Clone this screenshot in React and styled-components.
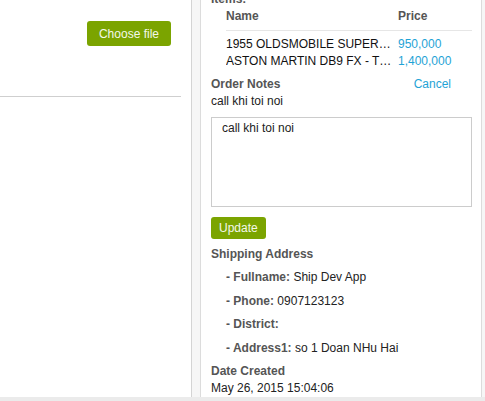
import React from "react";
import styled, { createGlobalStyle } from "styled-components";

const GlobalStyle = createGlobalStyle`
  html, body {
    margin: 0;
    padding: 0;
    background: #ffffff;
    font-family: "Liberation Sans", Arial, sans-serif;
    font-size: 12px;
    color: #222222;
  }
`;

const Page = styled.div`
  display: flex;
  flex-direction: column;
  width: 485px;
  height: 401px;
  overflow: hidden;
`;

const Main = styled.div`
  display: flex;
  height: 397px;
`;

const BottomBar = styled.div`
  height: 4px;
  background: #ebebeb;
`;

const LeftPane = styled.div`
  width: 191px;
  border-right: 1px solid #d4d4d4;
  background: #fff;
`;

const UploadRow = styled.div`
  display: flex;
  justify-content: flex-end;
  align-items: flex-start;
  padding: 21px 10px 0 0;
  height: 75px;
  border-bottom: 1px solid #cfcfcf;
  margin-right: 10px;
`;

const GreenButton = styled.button`
  background: #7ba400;
  color: #f4f8ea;
  border: none;
  border-radius: 3px;
  font-family: inherit;
  font-size: 12px;
  height: ${(p) => p.h}px;
  padding: 0 ${(p) => p.px}px;
  cursor: pointer;
`;

const RightArea = styled.div`
  flex: 1;
  background: #f6f6f6;
  padding: 0 3px 0 8px;
  display: flex;
`;

const Panel = styled.div`
  flex: 1;
  background: #fff;
  border-left: 1px solid #dcdcdc;
  border-right: 1px solid #dcdcdc;
  overflow: hidden;
`;

const Content = styled.div`
  margin-top: -9px;
  padding: 0 9px 0 10px;
  line-height: 17px;
`;

const Label = styled.div`
  font-weight: bold;
  color: #555555;
  margin-top: ${(p) => p.mt || 0}px;
`;

const Table = styled.div`
  margin-left: 15px;
`;

const TableRow = styled.div`
  display: grid;
  grid-template-columns: 172px 1fr;
`;

const HeaderRow = styled(TableRow)`
  font-weight: bold;
  color: #555555;
  padding-bottom: 5px;
  border-bottom: 1px solid #e6e6e6;
  margin-bottom: 5px;
`;

const ItemName = styled.div`
  white-space: nowrap;
  overflow: hidden;
  text-overflow: ellipsis;
  padding-right: 5px;
  color: #111;
`;

const Price = styled.div`
  color: #1fa3d6;
`;

const NotesHead = styled.div`
  display: flex;
  justify-content: space-between;
  margin-top: 6px;
  padding-right: 21px;
`;

const LinkText = styled.span`
  color: #1fa3d6;
  cursor: pointer;
`;

const Notes = styled.textarea`
  display: block;
  box-sizing: border-box;
  width: 100%;
  height: 90px;
  margin: 7px 0 10px;
  padding: 2px 10px;
  border: 1px solid #cccccc;
  font-family: inherit;
  font-size: 12px;
  line-height: 17px;
  color: #222;
  resize: none;
`;

const AddressList = styled.ul`
  list-style: none;
  margin: 6px 0 0;
  padding: 0 0 0 15px;
`;

const AddressItem = styled.li`
  margin-bottom: 6.5px;
`;

const Key = styled.b`
  color: #555555;
`;

const items = [
  { name: "1955 OLDSMOBILE SUPER 88 CONVERTIBLE", price: "950,000" },
  { name: "ASTON MARTIN DB9 FX - TOURING", price: "1,400,000" },
];

const address = [
  ["Fullname", "Ship Dev App"],
  ["Phone", "0907123123"],
  ["District", ""],
  ["Address1", "so 1 Doan NHu Hai"],
];

export default function App() {
  return (
    <Page>
      <GlobalStyle />
      <Main>
        <LeftPane>
          <UploadRow>
            <GreenButton h={25} px={12}>
              Choose file
            </GreenButton>
          </UploadRow>
        </LeftPane>
        <RightArea>
          <Panel>
            <Content>
              <Label>Items:</Label>
              <Table>
                <HeaderRow>
                  <div>Name</div>
                  <div>Price</div>
                </HeaderRow>
                {items.map((it) => (
                  <TableRow key={it.name}>
                    <ItemName>{it.name}</ItemName>
                    <Price>{it.price}</Price>
                  </TableRow>
                ))}
              </Table>
              <NotesHead>
                <Label>Order Notes</Label>
                <LinkText>Cancel</LinkText>
              </NotesHead>
              <div>call khi toi noi</div>
              <Notes defaultValue="call khi toi noi" />
              <GreenButton h={22} px={8}>
                Update
              </GreenButton>
              <Label mt={7}>Shipping Address</Label>
              <AddressList>
                {address.map(([k, v]) => (
                  <AddressItem key={k}>
                    <Key>- {k}:</Key> {v}
                  </AddressItem>
                ))}
              </AddressList>
              <Label mt={1}>Date Created</Label>
              <div>May 26, 2015 15:04:06</div>
            </Content>
          </Panel>
        </RightArea>
      </Main>
      <BottomBar />
    </Page>
  );
}
